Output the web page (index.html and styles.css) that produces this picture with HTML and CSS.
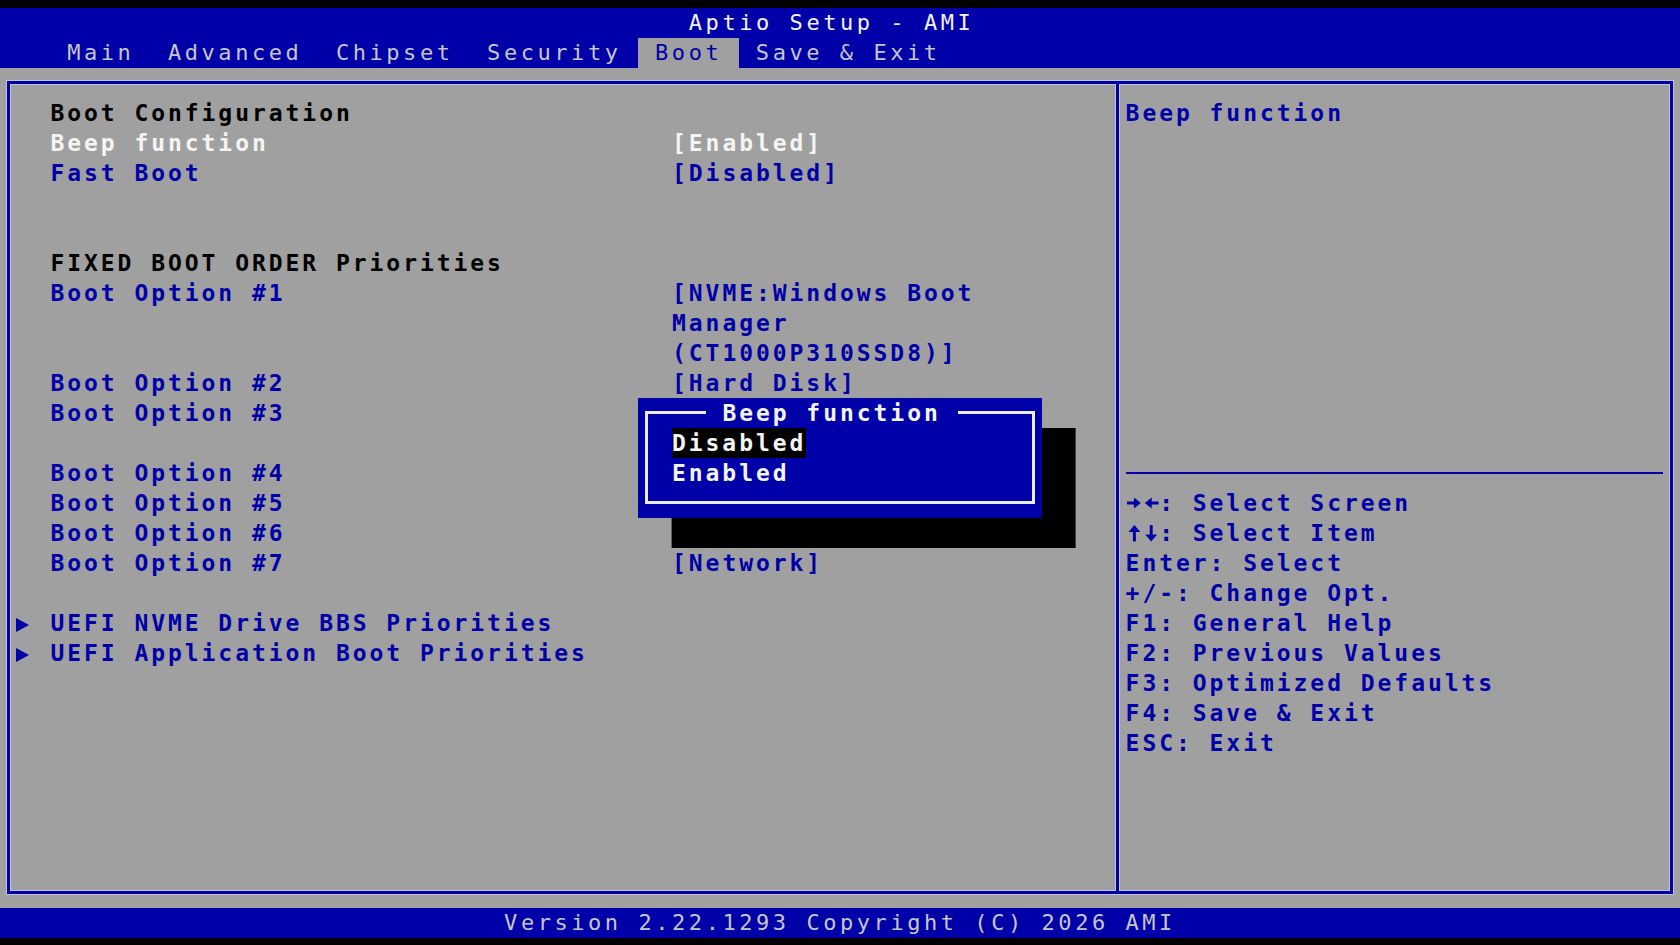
FILE: index.html
```html
<!DOCTYPE html>
<html lang="en">
<head>
    <meta charset="UTF-8">
    <meta name="viewport" content="width=device-width, initial-scale=1.0">
    <title>Aptio Setup - AMI</title>
    <link rel="stylesheet" href="styles.css">
</head>
<body>

<div class="screen">
    <header class="title-bar">Aptio Setup - AMI</header>

    <nav class="tabs">
        <span class="tab">Main</span>
        <span class="tab">Advanced</span>
        <span class="tab">Chipset</span>
        <span class="tab">Security</span>
        <span class="tab active">Boot</span>
        <span class="tab">Save &amp; Exit</span>
    </nav>

    <main class="workspace">
        <div class="frame">
            <section class="settings">
                <div class="row heading">Boot Configuration</div>
                <div class="row selected"><span>Beep function</span><span>[Enabled]</span></div>
                <div class="row"><span>Fast Boot</span><span>[Disabled]</span></div>
                <div class="row"></div>
                <div class="row"></div>
                <div class="row heading">FIXED BOOT ORDER Priorities</div>
                <div class="row"><span>Boot Option #1</span><span class="wrap">[NVME:Windows Boot<br>Manager<br>(CT1000P310SSD8)]</span></div>
                <div class="row"><span>Boot Option #2</span><span>[Hard Disk]</span></div>
                <div class="row"><span>Boot Option #3</span><span></span></div>
                <div class="row"></div>
                <div class="row"><span>Boot Option #4</span><span></span></div>
                <div class="row"><span>Boot Option #5</span><span></span></div>
                <div class="row"><span>Boot Option #6</span><span></span></div>
                <div class="row"><span>Boot Option #7</span><span>[Network]</span></div>
                <div class="row"></div>
                <div class="row submenu"><span><i class="arrow"></i>UEFI NVME Drive BBS Priorities</span></div>
                <div class="row submenu"><span><i class="arrow"></i>UEFI Application Boot Priorities</span></div>

                <!-- option picker for Beep function -->
                <div class="popup">
                    <div class="popup-box">
                        <div class="popup-title"> Beep function </div>
                        <div class="option"><span class="current">Disabled</span></div>
                        <div class="option"><span>Enabled</span></div>
                    </div>
                </div>
            </section>

            <aside class="help">
                <div class="help-text">Beep function</div>
                <div class="separator"></div>
                <div class="keys">
                    <div><svg class="key-icon" width="34" height="30" viewBox="0 0 34 30"><rect x="1" y="13.5" width="8" height="3"/><polygon points="8,9.5 15,15 8,20.5"/><polygon points="26,9.5 19,15 26,20.5"/><rect x="25" y="13.5" width="8" height="3"/></svg>: Select Screen</div>
                    <div><svg class="key-icon" width="34" height="30" viewBox="0 0 34 30"><polygon points="2.5,14 8.5,7 14.5,14"/><rect x="7" y="12" width="3" height="11.5"/><rect x="24" y="7" width="3" height="11.5"/><polygon points="19.5,16.5 25.5,23.5 31.5,16.5"/></svg>: Select Item</div>
                    <div>Enter: Select</div>
                    <div>+/-: Change Opt.</div>
                    <div>F1: General Help</div>
                    <div>F2: Previous Values</div>
                    <div>F3: Optimized Defaults</div>
                    <div>F4: Save &amp; Exit</div>
                    <div>ESC: Exit</div>
                </div>
            </aside>
        </div>
    </main>

    <footer class="version-bar">Version 2.22.1293 Copyright (C) 2026 AMI</footer>
</div>

</body>
</html>
```

FILE: styles.css
```css
body {
    margin: 0;
    padding: 0;
    background-color: #000;
    overflow: hidden;
}

.screen {
    width: 1680px;
    height: 945px;
    box-sizing: border-box;
    padding: 7.5px 0;
    background-color: #000;
    font-family: 'DejaVu Sans Mono', monospace;
    font-size: 23px;
    letter-spacing: 2.95px;
    line-height: 30px;
    white-space: nowrap;
}

/* Top bars */
.title-bar {
    height: 30px;
    background-color: #0000a8;
    color: #f2f2f2;
    text-align: center;
    padding-right: 16.8px;
    font-size: 22px;
    letter-spacing: 3.55px;
}

.tabs {
    display: flex;
    height: 30px;
    padding-left: 50.4px;
    background-color: #0000a8;
    font-size: 22px;
    letter-spacing: 3.55px;
}

.tab {
    padding: 0 16.8px;
    color: #c6c6c6;
}

.tab.active {
    background-color: #a0a0a0;
    color: #0000a8;
}

/* Main area */
.workspace {
    height: 840px;
    box-sizing: border-box;
    padding: 13.5px 6.9px;
    background-color: #a0a0a0;
}

.frame {
    display: flex;
    height: 813px;
    box-sizing: border-box;
    border: 3px solid #0000a8;
    box-shadow: 0 0 0 1px #c4c4d8, inset 0 0 0 1px #c4c4d8;
    font-weight: bold;
}

.settings {
    position: relative;
    width: 1108.8px;
    box-sizing: border-box;
    padding-top: 13.5px;
    border-right: 3px solid #0000a8;
    box-shadow: 1px 0 0 #c4c4d8, inset -1px 0 0 #c4c4d8;
}

.row {
    display: grid;
    grid-template-columns: 621.6px 1fr;
    min-height: 30px;
    padding-left: 40.5px;
    color: #0000a8;
}

.row.heading {
    color: #000;
}

.row.selected {
    color: #f4f4f4;
}

.arrow {
    display: inline-block;
    width: 0;
    height: 0;
    margin-left: -34px;
    margin-right: 21px;
    border-left: 13px solid #0000a8;
    border-top: 7.5px solid transparent;
    border-bottom: 7.5px solid transparent;
    vertical-align: -1px;
}

/* Popup */
.popup {
    position: absolute;
    left: 628.5px;
    top: 313.5px;
    width: 403.2px;
    height: 120px;
    box-sizing: border-box;
    padding: 13.5px 6.9px;
    background-color: #0000a8;
    box-shadow: 33.6px 30px 0 0 #000;
    color: #f4f4f4;
}

.popup-box {
    height: 93px;
    box-sizing: border-box;
    border: 3px solid #ececec;
}

.popup-title {
    width: fit-content;
    height: 30px;
    margin: -16.5px 0 0 57.3px;
    background-color: #0000a8;
    white-space: pre;
}

.option {
    height: 30px;
    padding-left: 23.7px;
}

.option .current {
    display: inline-block;
    background-color: #000;
}

/* Help panel */
.help {
    flex: 1;
    display: flex;
    flex-direction: column;
    padding: 13.5px 6.9px 0 6.9px;
    color: #0000a8;
}

.help-text {
    height: 360px;
}

.separator {
    display: flex;
    align-items: center;
    height: 30px;
}

.separator::before {
    content: "";
    flex: 1;
    border-top: 2px solid #0000a8;
}

.key-icon {
    width: 33.6px;
    height: 30px;
    vertical-align: top;
    fill: #0000a8;
}

/* Bottom bar */
.version-bar {
    height: 30px;
    background-color: #0000a8;
    color: #c6c6c6;
    text-align: center;
    font-size: 22px;
    letter-spacing: 3.55px;
}
```
